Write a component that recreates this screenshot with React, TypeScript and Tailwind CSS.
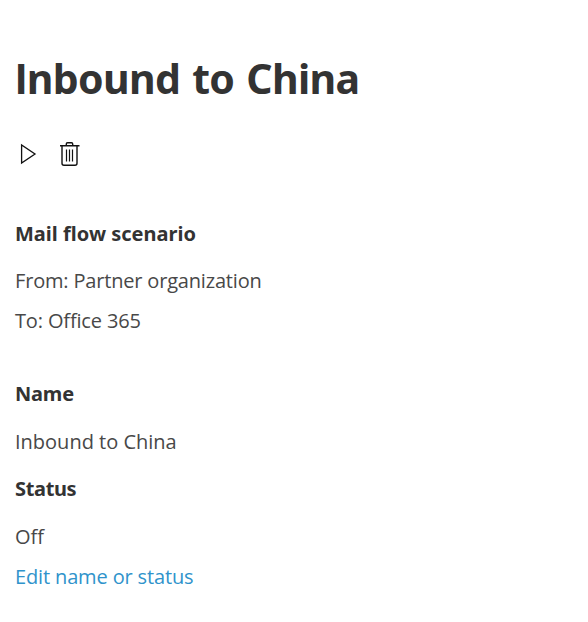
import React from "react";

const line = "m-0 whitespace-nowrap";

export default function App() {
  return (
    <main className="flex h-[622px] w-[588px] flex-col items-start overflow-hidden bg-white pl-[15px] font-['Open_Sans','Noto_Sans',sans-serif] text-[20px] leading-[40px] text-[#484848]">
      <h1 className={`${line} mt-[48px] h-[60px] font-['Noto_Sans',sans-serif] text-[41px] font-bold leading-[60px] tracking-[-0.62px] [word-spacing:1.8px] text-[#333333]`}>
        <span className="font-['Roboto',sans-serif] text-[42px] leading-none">I</span>nbound to China
      </h1>
      <div className="mt-[30px] flex h-[32px] items-center gap-[20px]">
        <button aria-label="Turn on" className="h-[32px] w-[24px]">
          <svg width="24" height="32" viewBox="0 0 24 32" fill="none" stroke="#111111" strokeWidth="1.3">
            <path d="M6.6 7V25L20 16Z" />
          </svg>
        </button>
        <button aria-label="Delete" className="h-[32px] w-[22px]">
          <svg width="22" height="32" viewBox="0 0 22 32" fill="none" stroke="#111111" strokeWidth="1.4">
            <path d="M1 7.7H20.5M7.3 7V6Q7.3 4.8 8.5 4.8H12.5Q13.7 4.8 13.7 6V7M3 8V25.2Q3 27.2 5 27.2H16Q18 27.2 18 25.2V8" />
            <path d="M7.5 11.5V23.5M10.5 11.5V23.5M13.5 11.5V23.5" strokeWidth="1.2" />
          </svg>
        </button>
      </div>
      <h2 className={`${line} mt-[44px] font-['Noto_Sans',sans-serif] font-bold text-[#333333]`}>Mail flow scenario</h2>
      <p className={`${line} mt-[7px] tracking-[-0.18px]`}>From: Partner organization</p>
      <p className={`${line} tracking-[-0.15px]`}>To: Office 365</p>
      <h2 className={`${line} mt-[33px] font-['Noto_Sans',sans-serif] font-bold tracking-[-0.2px] text-[#333333]`}>Name</h2>
      <p className={`${line} mt-[8px]`}>Inbound to China</p>
      <h2 className={`${line} mt-[7px] font-['Noto_Sans',sans-serif] font-bold tracking-[-0.35px] text-[#333333]`}>Status</h2>
      <p className={`${line} mt-[8px]`}>Off</p>
      <a href="#" className={`${line} tracking-[-0.14px] text-[#2f93cb]`}>Edit name or status</a>
    </main>
  );
}
